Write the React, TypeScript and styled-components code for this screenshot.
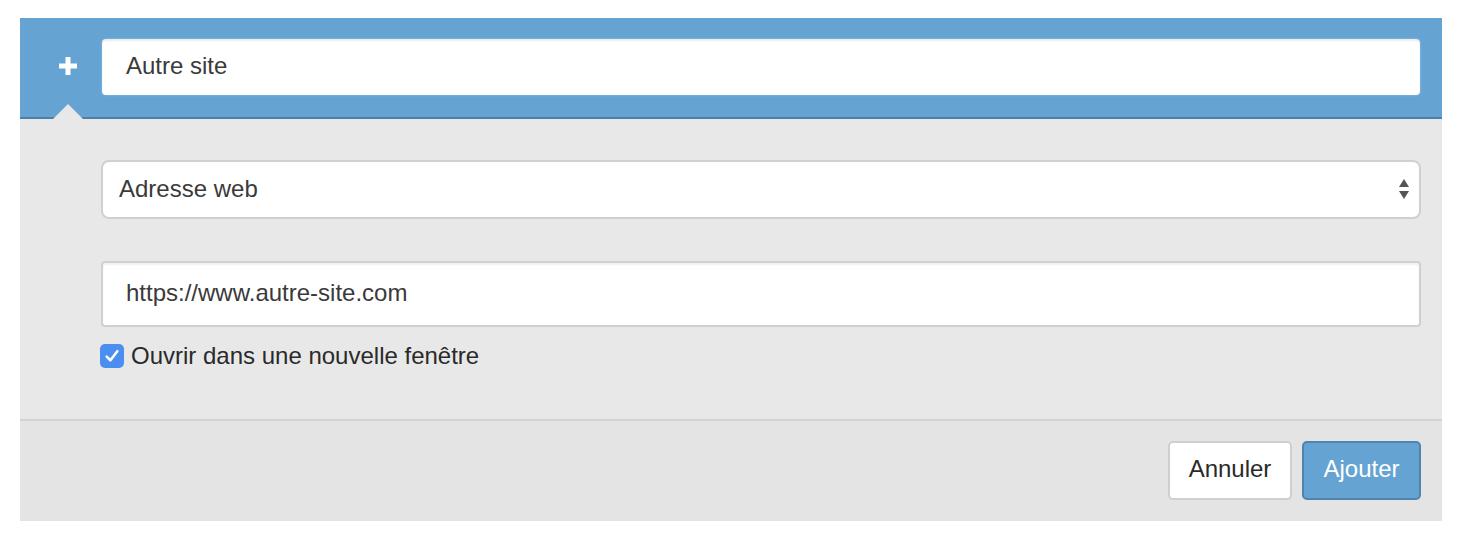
import React from "react";
import styled, { createGlobalStyle } from "styled-components";

const Global = createGlobalStyle`
  html, body { margin: 0; padding: 0; background: #ffffff; }
  body { font-family: "Liberation Sans", Arial, sans-serif; color: #333; }
  * { box-sizing: border-box; }
`;

const Page = styled.div`
  padding: 18px 32px 20px 20px;
`;

const Panel = styled.section`
  width: 1422px;
  display: flex;
  flex-direction: column;
`;

const Header = styled.header`
  position: relative;
  height: 101px;
  background: #65a3d2;
  border-bottom: 2px solid #4e7fa8;
  display: flex;
  align-items: center;
  padding: 0 22px 0 0;
`;

const IconCell = styled.div`
  width: 82px;
  padding-left: 14px;
  display: flex;
  justify-content: center;
  align-items: center;
  margin-top: -4px;
`;

const Notch = styled.div`
  position: absolute;
  left: 33px;
  bottom: -2px;
  width: 0;
  height: 0;
  border-left: 15px solid transparent;
  border-right: 15px solid transparent;
  border-bottom: 15px solid #e8e8e8;
`;

const TitleInput = styled.div`
  flex: 1;
  height: 56px;
  margin-top: -1px;
  background: #fff;
  border-radius: 4px;
  box-shadow: inset 0 2px 2px rgba(0, 0, 0, 0.08), 0 0 3px rgba(140, 195, 245, 0.9);
  display: flex;
  align-items: center;
  padding: 0 0 2px 24px;
  font-size: 24px;
  color: #3a3a3a;
`;

const Body = styled.div`
  background: #e8e8e8;
  padding: 41px 21px 51px 81px;
  display: flex;
  flex-direction: column;
  border-bottom: 2px solid #d2d2d2;
`;

const Select = styled.div`
  height: 59px;
  background: #fff;
  border: 2px solid #d0d0d0;
  border-radius: 8px;
  display: flex;
  align-items: center;
  justify-content: space-between;
  padding: 0 9px 2px 16px;
  font-size: 24px;
  color: #3a3a3a;
  margin-bottom: 42px;
`;

const TextField = styled.div`
  height: 66px;
  background: #fff;
  border: 2px solid #d0d0d0;
  border-radius: 4px;
  box-shadow: inset 0 2px 2px rgba(0, 0, 0, 0.06);
  display: flex;
  align-items: center;
  padding: 0 0 2px 23px;
  font-size: 24px;
  color: #3a3a3a;
  margin-bottom: 17px;
`;

const CheckRow = styled.label`
  display: flex;
  align-items: center;
  gap: 7px;
  margin-left: -1px;
  font-size: 24px;
  color: #2a2a2a;
  height: 24px;
`;

const Box = styled.span`
  width: 24px;
  height: 24px;
  border-radius: 5px;
  background: #4a8ff0;
  display: flex;
  align-items: center;
  justify-content: center;
`;

const Footer = styled.footer`
  background: #e4e4e4;
  height: 100px;
  display: flex;
  justify-content: flex-end;
  align-items: flex-start;
  padding: 20px 21px 0 0;
  gap: 10px;
`;

const Button = styled.button<{ $primary?: boolean }>`
  height: 59px;
  width: ${(p) => (p.$primary ? "119px" : "124px")};
  font-family: "Liberation Sans", Arial, sans-serif;
  font-size: 24px;
  border-radius: 5px;
  border: 2px solid ${(p) => (p.$primary ? "#4f83b2" : "#cfcfcf")};
  background: ${(p) => (p.$primary ? "#65a3d2" : "#ffffff")};
  color: ${(p) => (p.$primary ? "#ffffff" : "#2a2a2a")};
  padding: 0 0 4px 0;
  cursor: pointer;
`;

const Plus = () => (
  <svg width="18" height="18" viewBox="0 0 18 18">
    <rect x="6.5" y="0" width="5" height="18" fill="#fff" />
    <rect x="0" y="6.5" width="18" height="5" fill="#fff" />
  </svg>
);

const Arrows = () => (
  <svg width="12" height="22" viewBox="0 0 12 22">
    <polygon points="6,1 11,9 1,9" fill="#555" />
    <polygon points="1,13 11,13 6,21" fill="#555" />
  </svg>
);

const Check = () => (
  <svg width="16" height="16" viewBox="0 0 15 15">
    <polyline points="2.5,8 6,11.5 12.5,3" fill="none" stroke="#fff" strokeWidth="2.4" strokeLinecap="round" strokeLinejoin="round" />
  </svg>
);

export default function App() {
  return (
    <>
      <Global />
      <Page>
        <Panel>
          <Header>
            <IconCell>
              <Plus />
            </IconCell>
            <TitleInput>Autre site</TitleInput>
            <Notch />
          </Header>
          <Body>
            <Select>
              <span>Adresse web</span>
              <Arrows />
            </Select>
            <TextField>https://www.autre-site.com</TextField>
            <CheckRow>
              <Box>
                <Check />
              </Box>
              Ouvrir dans une nouvelle fenêtre
            </CheckRow>
          </Body>
          <Footer>
            <Button>Annuler</Button>
            <Button $primary>Ajouter</Button>
          </Footer>
        </Panel>
      </Page>
    </>
  );
}
